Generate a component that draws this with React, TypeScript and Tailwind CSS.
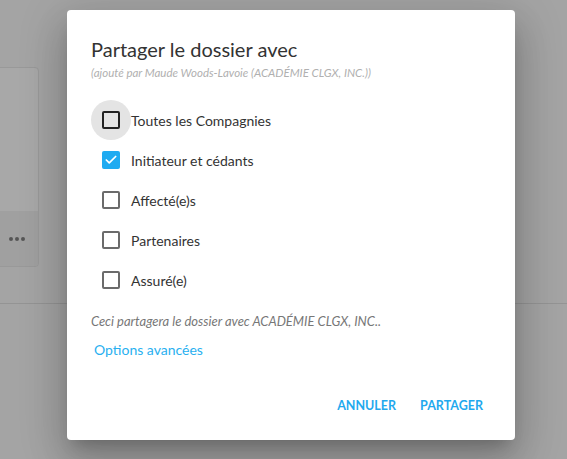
import { Check } from 'lucide-react';

const options = [
  { label: 'Toutes les Compagnies', checked: false, focused: true },
  { label: 'Initiateur et cédants', checked: true, focused: false },
  { label: 'Affecté(e)s', checked: false, focused: false },
  { label: 'Partenaires', checked: false, focused: false },
  { label: 'Assuré(e)', checked: false, focused: false },
];

function CheckRow({ label, checked, focused }: { label: string; checked: boolean; focused: boolean }) {
  return (
    <div className="flex h-10 items-center">
      <div
        className={`flex h-10 w-10 items-center justify-center rounded-full ${focused ? 'bg-[#e4e4e4]' : ''}`}
      >
        {checked ? (
          <div className="flex h-[18px] w-[18px] items-center justify-center rounded-[2px] bg-[#1fabf1]">
            <Check className="h-[14px] w-[14px] text-white" strokeWidth={3} />
          </div>
        ) : (
          <div
            className={`h-[18px] w-[18px] rounded-[2px] border-2 ${focused ? 'border-[#222]' : 'border-[#6b6b6b]'}`}
          />
        )}
      </div>
      <span className="text-[14px] text-[#333]">{label}</span>
    </div>
  );
}

export default function App() {
  return (
    <div className="relative h-[459px] w-[567px] overflow-hidden bg-[#a4a4a4] font-['Lato','Open_Sans',sans-serif]">
      {/* page behind the backdrop */}
      <div className="pt-[67px]">
        <div className="ml-[-200px] flex h-[200px] w-[239px] flex-col overflow-hidden rounded-[4px] border border-[#999] bg-[#a8a8a8]">
          <div className="flex-1" />
          <div className="flex h-[55px] items-center justify-end bg-[#a0a0a0] pr-[13px]">
            <div className="flex gap-[2px]">
              <span className="h-[4px] w-[4px] rounded-full bg-[#555]" />
              <span className="h-[4px] w-[4px] rounded-full bg-[#555]" />
              <span className="h-[4px] w-[4px] rounded-full bg-[#555]" />
            </div>
          </div>
        </div>
        <div className="mt-[36px] h-px bg-[#949494]" />
      </div>

      {/* dialog */}
      <div className="absolute left-[67px] top-[10px] flex h-[430px] w-[448px] flex-col rounded-[4px] bg-white shadow-[0_11px_15px_-7px_rgba(0,0,0,0.2),0_24px_38px_3px_rgba(0,0,0,0.14),0_9px_46px_8px_rgba(0,0,0,0.12)]">
        <div className="px-6 pt-[25px]">
          <h2 className="text-[20px] leading-[28px] text-[#333]">Partager le dossier avec</h2>
          <p className="mt-[2px] text-[11.5px] leading-[16px] italic text-[#b0b0b0]">
            (ajouté par Maude Woods-Lavoie (ACADÉMIE CLGX, INC.))
          </p>
        </div>
        <div className="mt-[19px] flex flex-col px-6">
          {options.map((o) => (
            <CheckRow key={o.label} {...o} />
          ))}
        </div>
        <p className="mt-[12px] px-6 text-[13px] italic text-[#777]">
          Ceci partagera le dossier avec ACADÉMIE CLGX, INC..
        </p>
        <a className="mt-[7px] px-[27px] text-[14px] text-[#29b0f0]">Options avancées</a>
        <div className="mt-auto flex justify-end gap-6 px-8 pb-[24px]">
          <button className="text-[12.5px] font-bold uppercase text-[#1fa9ee]">Annuler</button>
          <button className="text-[12.5px] font-bold uppercase text-[#1fa9ee]">Partager</button>
        </div>
      </div>
    </div>
  );
}
